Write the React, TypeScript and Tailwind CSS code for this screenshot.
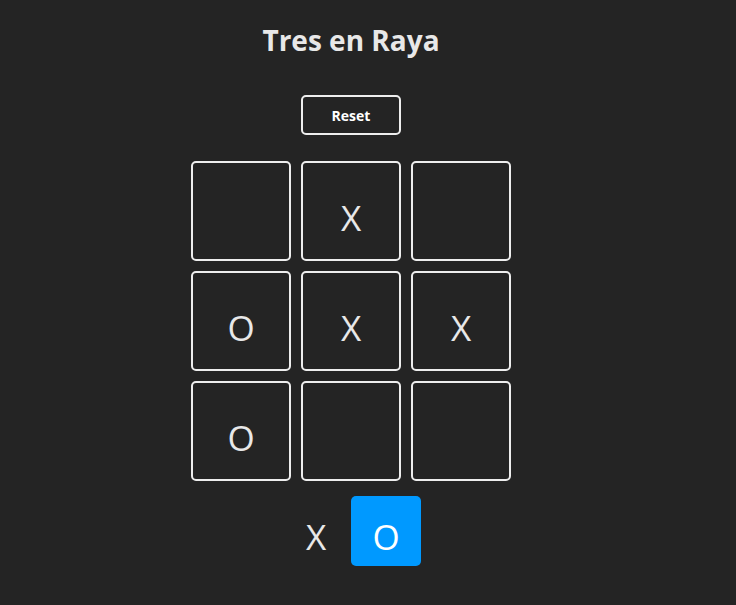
import React from "react";

const board: (string | null)[] = [null, "X", null, "O", "X", "X", "O", null, null];

const Square = ({
  children,
  selected,
  turn,
}: {
  children?: React.ReactNode;
  selected?: boolean;
  turn?: boolean;
}) => {
  if (turn) {
    return (
      <div
        className={`w-[70px] h-[70px] rounded-[5px] flex items-center justify-center pt-[11px] text-[35px] leading-none ${
          selected ? "bg-[#0099ff] text-white" : "text-[#e8e8e8]"
        }`}
      >
        {children}
      </div>
    );
  }
  return (
    <div className="w-[100px] h-[100px] border-2 border-[#eee] rounded-[5px] flex items-center justify-center pt-[13px] text-[35px] leading-none text-[#e8e8e8]">
      {children}
    </div>
  );
};

export default function App() {
  return (
    <main
      className="min-h-screen w-full bg-[#242424] text-[#e8e8e8]"
      style={{ fontFamily: '"Open Sans", "Noto Sans", sans-serif' }}
    >
      <div className="w-[702px] flex flex-col items-center pt-5">
        <h1 className="text-[28px] leading-[40px] font-bold">Tres en Raya</h1>

        <button className="mt-[35px] w-[100px] h-[40px] border-2 border-[#eee] rounded-[5px] text-[14px] font-bold text-white">
          Reset
        </button>

        <section className="mt-[26px] grid grid-cols-3 gap-[10px]">
          {board.map((value, index) => (
            <Square key={index}>{value}</Square>
          ))}
        </section>

        <section className="mt-[15px] flex">
          <Square turn>X</Square>
          <Square turn selected>
            O
          </Square>
        </section>
      </div>
    </main>
  );
}
